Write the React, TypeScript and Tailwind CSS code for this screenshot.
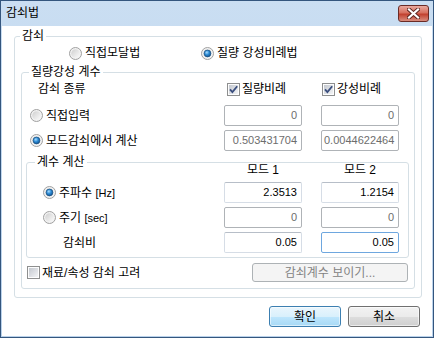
import React from 'react';

type BoxKind = 'enabled' | 'disabled' | 'focused';

function Radio({ checked = false }: { checked?: boolean }) {
  return (
    <svg width="13" height="13" viewBox="0 0 13 13" className="shrink-0">
      <defs>
        <linearGradient id="radioBg" x1="0" y1="0" x2="1" y2="1">
          <stop offset="0" stopColor="#cfcfcf" />
          <stop offset="1" stopColor="#fbfbfb" />
        </linearGradient>
        <radialGradient id="radioDot" cx="0.4" cy="0.35" r="0.75">
          <stop offset="0" stopColor="#a8dcff" />
          <stop offset="0.45" stopColor="#2b8ad4" />
          <stop offset="1" stopColor="#0e467f" />
        </radialGradient>
      </defs>
      <circle cx="6.5" cy="6.5" r="6" fill="#f2f2f2" stroke="#a0a0a0" />
      <circle cx="6.5" cy="6.5" r="4.3" fill="url(#radioBg)" />
      {checked && <circle cx="6.5" cy="6.5" r="3.4" fill="url(#radioDot)" stroke="#1a4f80" strokeWidth="0.7" />}
    </svg>
  );
}

function Check({ checked = false }: { checked?: boolean }) {
  return (
    <svg width="13" height="13" viewBox="0 0 13 13" className="shrink-0">
      <defs>
        <linearGradient id="chkBg" x1="0" y1="0" x2="1" y2="1">
          <stop offset="0" stopColor="#c4c8cf" />
          <stop offset="1" stopColor="#f3f4f6" />
        </linearGradient>
      </defs>
      <rect x="0.5" y="0.5" width="12" height="12" fill="#fdfdfd" stroke="#8e8f8f" />
      <rect x="2" y="2" width="9" height="9" fill="url(#chkBg)" />
      {checked && <path d="M3 6.3 L5.4 9 L10.2 3.2" stroke="#3a4e7e" strokeWidth="1.8" fill="none" />}
    </svg>
  );
}

function Box({ value, kind }: { value: string; kind: BoxKind }) {
  const tone =
    kind === 'disabled'
      ? 'border-[#afb3b7] text-[#6d6d6d]'
      : kind === 'focused'
        ? 'border-[#6ea7df] text-black'
        : 'border-[#d6dde6] border-t-[#b7bec8] text-black';
  return (
    <div
      className={`h-[21px] w-[78px] overflow-hidden whitespace-nowrap rounded-[2px] border bg-white pl-[2px] pr-[4px] text-right text-[11px] leading-[19px] ${tone}`}
    >
      {value}
    </div>
  );
}

export default function App() {
  return (
    <div className="h-[338px] w-[434px] border border-[#34567e] bg-[linear-gradient(#cadef2,#b9d1ea)] font-['Liberation_Sans','Noto_Sans_CJK_KR',sans-serif] text-[12px] text-black flex flex-col">
      {/* Title bar */}
      <div className="h-[25px] flex items-start">
        <span className="pl-[5px] pt-[4px] leading-[17px]">감쇠법</span>
        <div className="ml-auto mr-[4px] mt-[4px] flex h-[17px] w-[31px] items-center justify-center rounded-[3px] border border-[#6a2b26] bg-[linear-gradient(#e9a99e_0%,#d7705f_45%,#c2412f_55%,#d88d7e_100%)]">
          <svg width="13" height="11" viewBox="0 0 13 11">
            <path d="M2 1.5 L11 9.5 M11 1.5 L2 9.5" stroke="#5b2620" strokeWidth="4" strokeLinecap="square" />
            <path d="M2 1.5 L11 9.5 M11 1.5 L2 9.5" stroke="#ffffff" strokeWidth="2.2" strokeLinecap="square" />
          </svg>
        </div>
      </div>

      {/* Client */}
      <div className="mx-[1px] mb-[1px] flex-1 bg-white pt-[2px]">
        <fieldset className="ml-[12px] w-[408px] rounded-[3px] border border-[#d5dfe5] pb-[8px]">
          <legend className="ml-[5px] px-[2px] leading-[16px]">감쇠</legend>

          <div className="flex h-[18px] items-center pl-[54px]">
            <div className="flex w-[132px] items-center gap-[3px]">
              <Radio />
              <span>직접모달법</span>
            </div>
            <div className="flex items-center gap-[3px]">
              <Radio checked />
              <span>질량 강성비례법</span>
            </div>
          </div>

          <fieldset className="ml-[6px] mt-[2px] w-[394px] rounded-[3px] border border-[#d5dfe5] pb-[6px]">
            <legend className="ml-[7px] px-[2px] leading-[16px]">질량강성 계수</legend>

            <div className="grid grid-cols-[183px_78px_78px] gap-x-[19px]">
              <div className="flex h-[18px] items-center pl-[16px]">감쇠 종류</div>
              <div className="flex items-center gap-[2px] pl-[3px]">
                <Check checked />
                <span>질량비례</span>
              </div>
              <div className="flex items-center gap-[2px] pl-[1px]">
                <Check checked />
                <span>강성비례</span>
              </div>
            </div>

            <div className="mt-[7px] grid grid-cols-[183px_78px_78px] gap-x-[19px] gap-y-[4px]">
              <div className="flex items-center gap-[3px] pl-[8px]">
                <Radio />
                <span>직접입력</span>
              </div>
              <Box value="0" kind="disabled" />
              <Box value="0" kind="disabled" />

              <div className="flex items-center gap-[3px] pl-[8px]">
                <Radio checked />
                <span>모드감쇠에서 계산</span>
              </div>
              <Box value="0.503431704" kind="disabled" />
              <Box value="0.0044622464" kind="disabled" />
            </div>

            <fieldset className="ml-[4px] mt-[4px] w-[383px] rounded-[3px] border border-[#d5dfe5] pb-[4px]">
              <legend className="ml-[8px] px-[2px] leading-[14px]">계수 계산</legend>

              <div className="-mt-[7px] grid grid-cols-[178px_78px_78px] gap-x-[19px] gap-y-[4px]">
                <div className="h-[16px]" />
                <div className="text-center leading-[16px]">모드 1</div>
                <div className="text-center leading-[16px]">모드 2</div>

                <div className="flex items-center gap-[3px] pl-[16px]">
                  <Radio checked />
                  <span>
                    주파수 <span className="text-[11px]">[Hz]</span>
                  </span>
                </div>
                <Box value="2.3513" kind="enabled" />
                <Box value="1.2154" kind="enabled" />

                <div className="flex items-center gap-[3px] pl-[16px]">
                  <Radio />
                  <span>
                    주기 <span className="text-[11px]">[sec]</span>
                  </span>
                </div>
                <Box value="0" kind="disabled" />
                <Box value="0" kind="disabled" />

                <div className="flex items-center pl-[36px]">감쇠비</div>
                <Box value="0.05" kind="enabled" />
                <Box value="0.05" kind="focused" />
              </div>
            </fieldset>

            <div className="mt-[5px] flex h-[19px] items-center pl-[5px] pr-[6px]">
              <Check />
              <span className="ml-[2px]">재료/속성 감쇠 고려</span>
              <div className="ml-auto flex h-[19px] w-[156px] items-center justify-center rounded-[3px] border border-[#adb2b5] bg-[#f4f4f4] text-[#838383]">
                감쇠계수 보이기...
              </div>
            </div>
          </fieldset>
        </fieldset>

        <div className="mt-[8px] flex justify-end gap-[7px] pr-[12px]">
          <div className="flex h-[21px] w-[72px] items-center justify-center rounded-[3px] border border-[#3c7fb1] bg-[linear-gradient(#eaf6fd_0%,#d9f0fc_50%,#bee6fd_51%,#a7d9f5_100%)] shadow-[inset_0_0_0_1px_rgba(255,255,255,0.55)]">
            확인
          </div>
          <div className="flex h-[21px] w-[72px] items-center justify-center rounded-[3px] border border-[#707070] bg-[linear-gradient(#f2f2f2_0%,#ebebeb_50%,#dddddd_51%,#cfcfcf_100%)] shadow-[inset_0_0_0_1px_rgba(255,255,255,0.6)]">
            취소
          </div>
        </div>
      </div>
    </div>
  );
}
